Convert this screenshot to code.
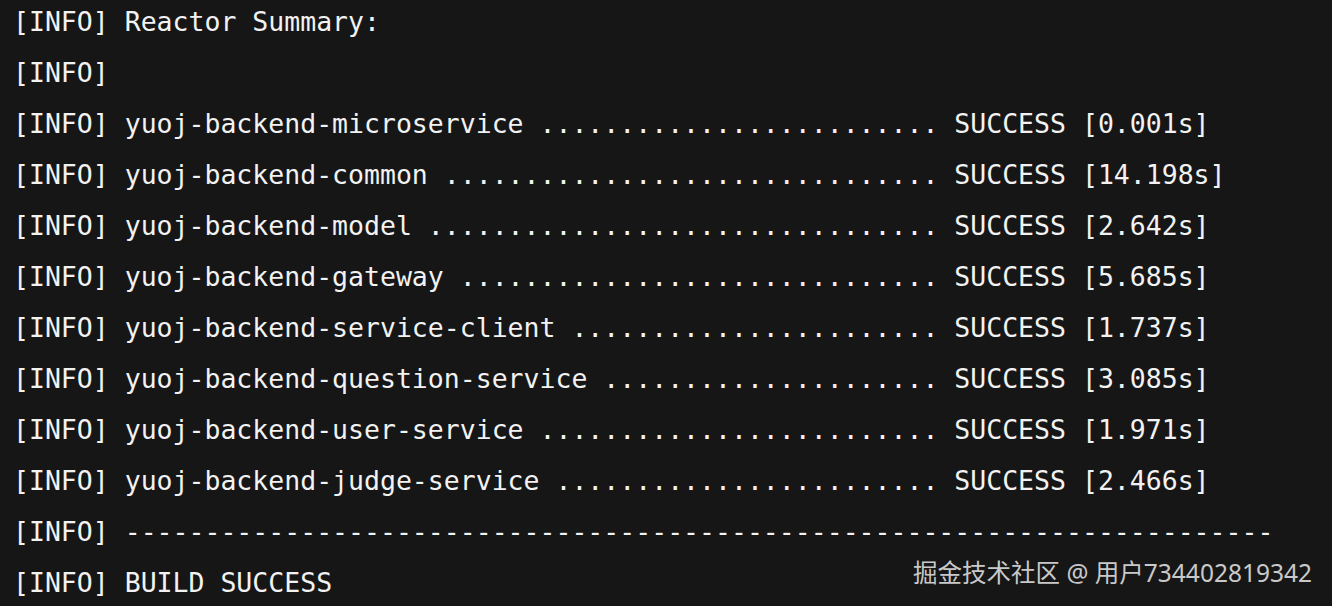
import React from 'react';

const modules: [string, string][] = [
  ['yuoj-backend-microservice', '0.001s'],
  ['yuoj-backend-common', '14.198s'],
  ['yuoj-backend-model', '2.642s'],
  ['yuoj-backend-gateway', '5.685s'],
  ['yuoj-backend-service-client', '1.737s'],
  ['yuoj-backend-question-service', '3.085s'],
  ['yuoj-backend-user-service', '1.971s'],
  ['yuoj-backend-judge-service', '2.466s'],
];

const pad = (name: string) => name + ' ' + '.'.repeat(52 - name.length - 2) + ' ';

const App = () => {
  const lines = [
    '[INFO] Reactor Summary:',
    '[INFO]',
    ...modules.map(([n, t]) => `[INFO] ${pad(n)}SUCCESS [${t}]`),
    '[INFO] ' + '-'.repeat(72),
    '[INFO] BUILD SUCCESS',
  ];

  return (
    <main className="relative w-[1332px] h-[606px] overflow-hidden bg-[#161616]">
      <div className="pl-[13px] -mt-[4px] text-[#f2f2f2] text-[26.5px] leading-[51px] whitespace-pre font-['DejaVu_Sans_Mono',monospace]">
        {lines.map((l, i) => (
          <div key={i}>{l}</div>
        ))}
      </div>
      <div className="absolute right-[20px] bottom-[21px] text-[24.5px] leading-none text-[#c9c9c9] font-['Noto_Sans','Noto_Sans_CJK_SC',sans-serif]">
        掘金技术社区 @ 用户734402819342
      </div>
    </main>
  );
};

export default App;
